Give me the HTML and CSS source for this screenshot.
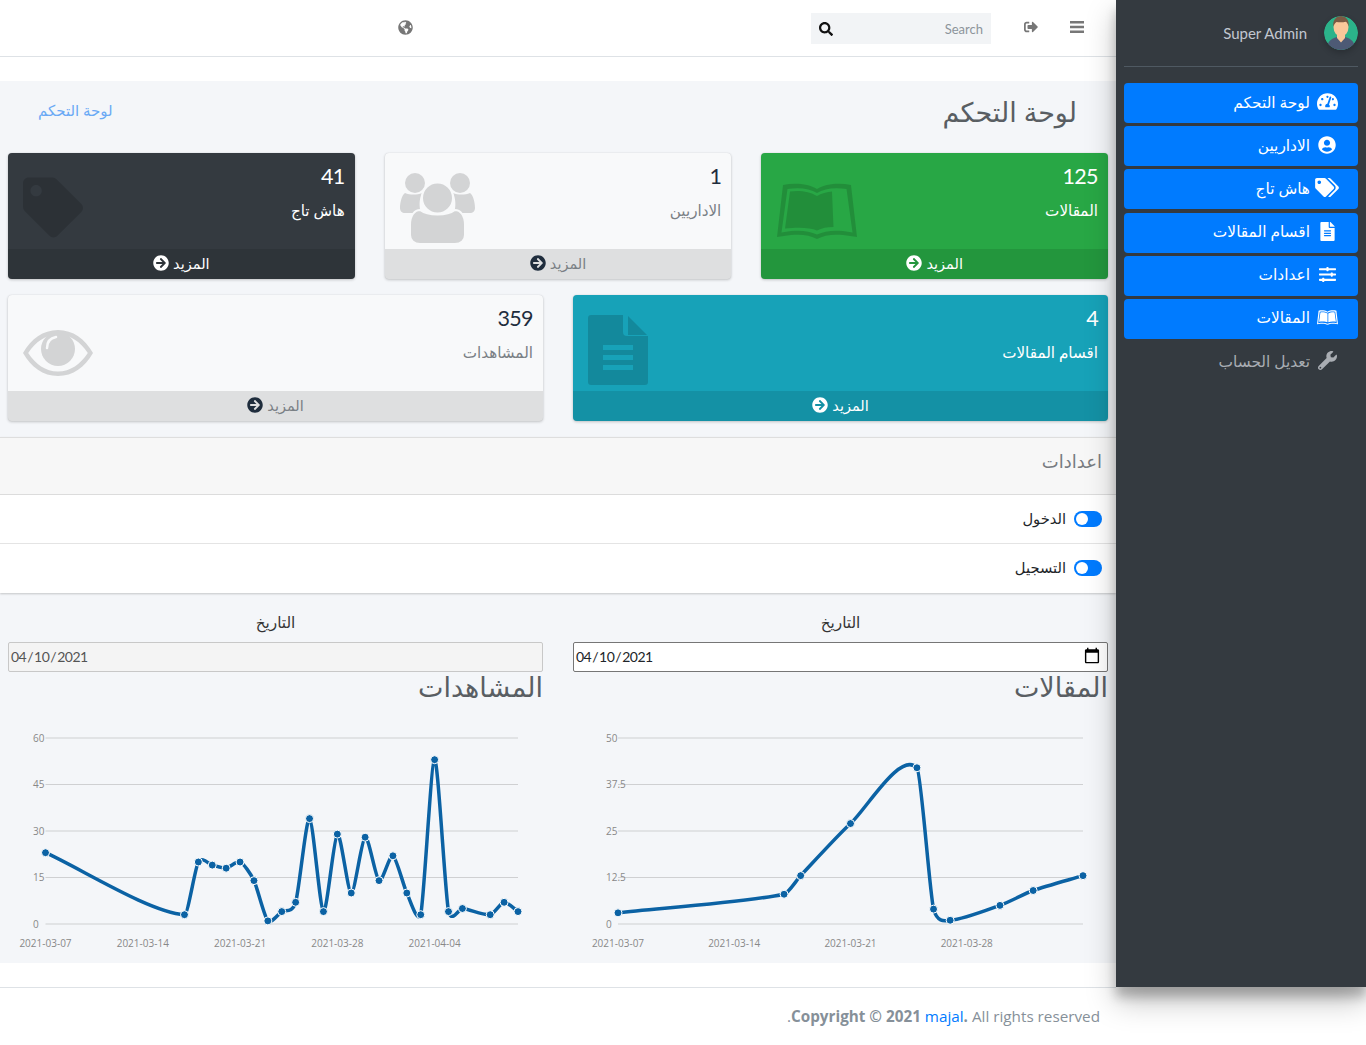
FILE: index.html
```html
<!DOCTYPE html>
<html lang="ar" dir="rtl">
<head>
<meta charset="utf-8">
<title>لوحة التحكم</title>
<link rel="stylesheet" href="styles.css">
</head>
<body>
<div class="page">
  <aside class="sidebar">
    <div class="user-panel">
      <svg class="avatar" viewBox="0 0 34 34"><defs><clipPath id="av"><circle cx="17" cy="17" r="17"/></clipPath></defs><g clip-path="url(#av)"><rect width="34" height="34" fill="#2bb38a"/><path d="M3 34c0-8 3-11 10-13l4 3 4-3c7 2 10 5 10 13z" fill="#4d5a75"/><path d="M13 17h8v5l-4 4.500-4-4.500z" fill="#f9c79a"/><ellipse cx="17" cy="11" rx="7.500" ry="9.500" fill="#f9c79a"/><path d="M9.300 10.500C8.500 4 12.500 0 17 0s8.500 4 7.700 10.500c-.8-2.500-1.700-4-2.700-4.800-3 .8-7 .8-9.500.3-1.200 1-2.300 2.300-3.200 4.500z" fill="#7a5a44"/></g></svg>
      <span class="user-name">Super Admin</span>
    </div>
    <nav class="side-nav">
      <a class="nav-link active"><span class="nav-icon"><svg viewBox="0 0 576 512" width="21" height="19"><path d="M288 32C128.94 32 0 160.94 0 320c0 52.8 14.25 102.26 39.06 144.8 5.61 9.62 16.3 15.2 27.44 15.2h443c11.14 0 21.83-5.58 27.44-15.2C561.75 422.26 576 372.8 576 320c0-159.06-128.94-288-288-288zm0 64c14.71 0 26.58 10.13 30.32 23.65-1.11 2.26-2.64 4.23-3.45 6.67l-9.22 27.67c-5.13 3.49-10.97 6.01-17.64 6.01-17.67 0-32-14.33-32-32S270.33 96 288 96zM96 384c-17.67 0-32-14.33-32-32s14.33-32 32-32 32 14.33 32 32-14.33 32-32 32zm48-160c-17.67 0-32-14.33-32-32s14.33-32 32-32 32 14.33 32 32-14.33 32-32 32zm246.77-72.41l-61.33 184C343.13 347.33 352 364.54 352 384c0 11.72-3.38 22.55-8.88 32H232.88c-5.5-9.45-8.88-20.28-8.88-32 0-33.94 26.5-61.43 59.9-63.59l61.34-184.01c4.17-12.56 17.73-19.45 30.36-15.17 12.57 4.19 19.35 17.79 15.17 30.36zm14.66 57.2l15.52-46.55c3.47-1.29 7.13-2.23 11.05-2.23 17.67 0 32 14.33 32 32s-14.33 32-32 32c-11.38-.01-20.89-6.28-26.57-15.22zM480 384c-17.67 0-32-14.33-32-32s14.33-32 32-32 32 14.33 32 32-14.33 32-32 32z"/></svg></span><span class="nav-text">لوحة التحكم</span></a>
      <a class="nav-link active"><span class="nav-icon"><svg viewBox="0 0 496 512" width="18" height="18"><path d="M248 8C111 8 0 119 0 256s111 248 248 248 248-111 248-248S385 8 248 8zm0 96c48.6 0 88 39.4 88 88s-39.400 88-88 88-88-39.400-88-88 39.400-88 88-88zm0 344c-58.700 0-111.300-26.600-146.500-68.200 18.800-35.400 55.600-59.800 98.500-59.800 2.400 0 4.800.4 7.100 1.100 13 4.200 26.600 6.900 40.900 6.900 14.300 0 28-2.700 40.900-6.900 2.300-.7 4.700-1.100 7.100-1.100 42.900 0 79.700 24.400 98.500 59.800C359.300 421.400 306.700 448 248 448z"/></svg></span><span class="nav-text">الاداريين</span></a>
      <a class="nav-link active"><span class="nav-icon"><svg viewBox="0 0 640 512" width="24" height="19"><path d="M497.941 225.941L286.059 14.059A48 48 0 0 0 252.118 0H48C21.490 0 0 21.490 0 48v204.118a48 48 0 0 0 14.059 33.941l211.882 211.882c18.744 18.745 49.136 18.746 67.882 0l204.118-204.118c18.745-18.745 18.745-49.137 0-67.882zM112 160c-26.510 0-48-21.490-48-48s21.490-48 48-48 48 21.490 48 48-21.490 48-48 48zm513.941 133.823L421.823 497.941c-18.745 18.745-49.137 18.745-67.882 0l-.36-.36L527.640 323.522c16.999-16.999 26.360-39.600 26.360-63.640s-9.362-46.641-26.360-63.640L331.397 0h48.721a48 48 0 0 1 33.941 14.059l211.882 211.882c18.745 18.745 18.745 49.137 0 67.882z"/></svg></span><span class="nav-text">هاش تاج</span></a>
      <a class="nav-link active"><span class="nav-icon"><svg viewBox="0 0 384 512" width="15" height="19"><path d="M224 136V0H24C10.700 0 0 10.700 0 24v464c0 13.300 10.700 24 24 24h336c13.300 0 24-10.700 24-24V160H248c-13.200 0-24-10.800-24-24zm64 236c0 6.600-5.400 12-12 12H108c-6.600 0-12-5.400-12-12v-8c0-6.600 5.400-12 12-12h168c6.600 0 12 5.400 12 12v8zm0-64c0 6.600-5.400 12-12 12H108c-6.600 0-12-5.400-12-12v-8c0-6.600 5.400-12 12-12h168c6.600 0 12 5.400 12 12v8zm0-72v8c0 6.600-5.400 12-12 12H108c-6.600 0-12-5.400-12-12v-8c0-6.600 5.400-12 12-12h168c6.600 0 12 5.400 12 12zm96-114.100v6.100H256V0h6.100c6.400 0 12.500 2.500 17 7l97.900 98c4.500 4.500 7 10.600 7 16.900z"/></svg></span><span class="nav-text">اقسام المقالات</span></a>
      <a class="nav-link active"><span class="nav-icon"><svg viewBox="0 0 512 512" width="17" height="17"><path d="M496 384H160v-16c0-8.800-7.200-16-16-16h-32c-8.800 0-16 7.200-16 16v16H16c-8.800 0-16 7.200-16 16v32c0 8.800 7.200 16 16 16h80v16c0 8.800 7.200 16 16 16h32c8.800 0 16-7.200 16-16v-16h336c8.800 0 16-7.200 16-16v-32c0-8.800-7.200-16-16-16zm0-160h-80v-16c0-8.800-7.200-16-16-16h-32c-8.800 0-16 7.200-16 16v16H16c-8.800 0-16 7.200-16 16v32c0 8.800 7.200 16 16 16h336v16c0 8.800 7.200 16 16 16h32c8.800 0 16-7.200 16-16v-16h80c8.800 0 16-7.200 16-16v-32c0-8.800-7.200-16-16-16zm0-160H288V48c0-8.800-7.200-16-16-16h-32c-8.800 0-16 7.200-16 16v16H16C7.200 64 0 71.200 0 80v32c0 8.800 7.200 16 16 16h208v16c0 8.800 7.200 16 16 16h32c8.800 0 16-7.200 16-16v-16h208c8.800 0 16-7.200 16-16V80c0-8.800-7.200-16-16-16z"/></svg></span><span class="nav-text">اعدادات</span></a>
      <a class="nav-link active"><span class="nav-icon"><svg viewBox="0 0 80 56" width="21" height="15"><path fill-rule="evenodd" d="M6 2C18-.5 32 1 40 6 48 1 62-.5 74 2l6 52-14-2c-10-1-19 0-26 4-7-4-16-5-26-4L0 54zM10.500 6 4.500 49.500 14 48c10-1 19 0 26 3.500C47 48 56 47 66 48l9.500 1.500L69.500 6C58 4 47 5.500 40 10 33 5.500 22 4 10.500 6z"/><path d="M13 8.500c9-1.500 20 0 27 4.500v33c-7-3-18-3.500-32-2zM43 13c5-3 13-5 24-4.500l5 35.500c-11-1.500-21-1-29 2z"/></svg></span><span class="nav-text">المقالات</span></a>
      <a class="nav-link muted"><span class="nav-icon"><svg viewBox="0 0 512 512" width="19" height="19"><path d="M507.730 109.100c-2.240-9.030-13.540-12.090-20.120-5.510l-74.360 74.360-67.880-11.310-11.310-67.880 74.360-74.360c6.620-6.620 3.430-17.900-5.660-20.160-47.380-11.740-99.550.91-136.580 37.930-39.640 39.640-50.550 97.100-34.050 147.200L18.740 402.760c-24.990 24.990-24.990 65.510 0 90.500 24.990 24.990 65.510 24.990 90.500 0l213.210-213.210c50.120 16.710 107.470 5.680 147.370-34.220 37.070-37.070 49.700-89.320 37.910-136.730zM64 472c-13.250 0-24-10.750-24-24 0-13.260 10.750-24 24-24s24 10.740 24 24c0 13.250-10.750 24-24 24z"/></svg></span><span class="nav-text">تعديل الحساب</span></a>
    </nav>
  </aside>

  <div class="main">
    <header class="navbar">
      <button class="nav-btn" aria-label="menu"><svg viewBox="0 0 14 14" width="14" height="14"><path d="M0 1h14v2.400H0zM0 5.800h14v2.400H0zM0 10.600h14V13H0z"/></svg></button>
      <button class="nav-btn" aria-label="logout"><svg viewBox="0 0 512 512" width="14" height="14"><path d="M497 273L329 441c-15 15-41 4.500-41-17v-96H152c-13.300 0-24-10.700-24-24v-96c0-13.300 10.700-24 24-24h136V88c0-21.400 25.900-32 41-17l168 168c9.300 9.400 9.300 24.600 0 34zM192 436v-40c0-6.600-5.400-12-12-12H96c-17.700 0-32-14.300-32-32V160c0-17.700 14.300-32 32-32h84c6.600 0 12-5.400 12-12V76c0-6.600-5.400-12-12-12H96c-53 0-96 43-96 96v192c0 53 43 96 96 96h84c6.600 0 12-5.400 12-12z"/></svg></button>
      <div class="search"><span class="search-text">Search</span><svg viewBox="0 0 512 512" width="14" height="14"><path d="M505 442.700L405.300 343c-4.500-4.500-10.600-7-17-7H372c27.600-35.300 44-79.700 44-128C416 93.100 322.900 0 208 0S0 93.100 0 208s93.100 208 208 208c48.300 0 92.700-16.400 128-44v16.300c0 6.400 2.500 12.500 7 17l99.700 99.700c9.400 9.400 24.600 9.400 33.900 0l28.300-28.300c9.400-9.400 9.400-24.600.1-34zM208 336c-70.700 0-128-57.200-128-128 0-70.700 57.200-128 128-128 70.700 0 128 57.200 128 128 0 70.700-57.200 128-128 128z"/></svg></div>
      <button class="nav-btn globe" aria-label="language"><svg viewBox="0 0 496 512" width="15" height="15"><path d="M248 8C111.030 8 0 119.030 0 256s111.030 248 248 248 248-111.030 248-248S384.970 8 248 8zm82.290 357.600c-3.900 3.880-7.990 7.950-11.310 11.280-2.990 3-5.100 6.700-6.170 10.710-1.510 5.660-2.730 11.380-4.770 16.870l-17.390 46.850c-13.760 3-28 4.690-42.650 4.690v-27.380c1.690-12.620-7.640-36.260-22.630-51.250-6-6-9.370-14.140-9.370-22.630v-32.010c0-11.640-6.270-22.340-16.460-27.970-14.370-7.950-34.810-19.060-48.810-26.110-11.480-5.780-22.100-13.140-31.650-21.750l-.8-.72a114.792 114.792 0 0 1-18.060-20.740c-9.380-13.770-24.660-36.420-34.590-51.140 20.470-45.500 57.360-82.040 103.200-101.890l24.010 12.010C203.480 89.740 216 82.010 216 70.110v-11.300c7.990-1.290 16.120-2.110 24.390-2.420l28.300 28.300c6.250 6.250 6.250 16.380 0 22.630L264 112l-10.340 10.340c-3.120 3.120-3.120 8.190 0 11.310l4.690 4.690c3.120 3.120 3.120 8.190 0 11.310l-8 8a8.008 8.008 0 0 1-5.660 2.340h-8.990c-2.080 0-4.080.81-5.580 2.270l-9.920 9.650a8.008 8.008 0 0 0-1.580 9.310l15.590 31.190c2.660 5.320-1.210 11.580-7.150 11.580h-5.640c-1.930 0-3.790-.7-5.240-1.960l-9.280-8.060a16.017 16.017 0 0 0-15.550-3.100l-31.170 10.390a11.950 11.950 0 0 0-8.170 11.340c0 4.530 2.560 8.660 6.610 10.690l11.080 5.540c9.410 4.710 19.790 7.160 30.310 7.160s22.590 27.290 32 32h66.750c8.490 0 16.620 3.370 22.630 9.370l13.690 13.690a30.503 30.503 0 0 1 8.930 21.570 46.536 46.536 0 0 1-13.720 32.980zM417 274.250c-5.790-1.450-10.840-5-14.150-9.970l-17.980-26.970a23.970 23.970 0 0 1 0-26.620l19.590-29.380c2.320-3.470 5.500-6.290 9.240-8.150l12.980-6.490C440.200 193.590 448 223.870 448 256c0 8.670-.74 17.160-1.820 25.540L417 274.250z"/></svg></button>
    </header>

    <main class="content">
      <div class="content-head">
        <h1 class="page-title">لوحة التحكم</h1>
        <a class="crumb">لوحة التحكم</a>
      </div>

      <section class="cards cards-3">
        <article class="stat stat-green">
          <div class="stat-body"><div class="stat-num">125</div><div class="stat-label">المقالات</div>
            <svg class="stat-icon icon-book" viewBox="0 0 80 56"><path fill-rule="evenodd" d="M6 2C18-.5 32 1 40 6 48 1 62-.5 74 2l6 52-14-2c-10-1-19 0-26 4-7-4-16-5-26-4L0 54zM10.500 6 4.500 49.500 14 48c10-1 19 0 26 3.500C47 48 56 47 66 48l9.500 1.500L69.500 6C58 4 47 5.500 40 10 33 5.500 22 4 10.500 6z"/><path d="M13 8.500c9-1.500 20 0 27 4.500 4-2.500 10-4 15-4.500L56.500 44c-6.500 0-11.500 1-16.500 3.500C33 44.500 22 44 8 45.500z"/></svg>
          </div>
          <a class="stat-more"><span class="more-text">المزيد</span><svg class="more-icon" viewBox="0 0 512 512"><path d="M256 8c137 0 248 111 248 248S393 504 256 504 8 393 8 256 119 8 256 8zm-28.900 143.600l75.500 72.400H120c-13.300 0-24 10.700-24 24v16c0 13.300 10.700 24 24 24h182.600l-75.500 72.400c-9.700 9.300-9.900 24.800-.4 34.300l11 10.900c9.400 9.400 24.600 9.400 33.900 0L404.300 273c9.400-9.400 9.400-24.600 0-33.900L271.600 106.300c-9.400-9.400-24.600-9.400-33.900 0l-11 10.900c-9.500 9.600-9.300 25.100.4 34.400z"/></svg></a>
        </article>
        <article class="stat stat-light">
          <div class="stat-body"><div class="stat-num">1</div><div class="stat-label">الاداريين</div>
            <svg class="stat-icon icon-users" viewBox="0 0 76 72"><g fill="#d3d4d5"><circle cx="15" cy="10" r="10"/><circle cx="60" cy="10" r="10"/><path d="M5 20c-3 2-5 9-5 15 0 3 2 5 5 5h16c-2-6-2-14 1-20-5 2-12 2-17 0z"/><path d="M70 20c3 2 5 9 5 15 0 3-2 5-5 5H54c2-6 2-14-1-20 5 2 12 2 17 0z"/></g><g fill="#d3d4d5" stroke="#f8f9fa" stroke-width="2"><circle cx="37.500" cy="25" r="15.500"/><path d="M10 52c0-10 5-15 10-15 8 6 27 6 35 0 5 0 10 5 10 15v10c0 5-4 9-10 9H20c-6 0-10-4-10-9z"/></g></svg>
          </div>
          <a class="stat-more"><span class="more-text">المزيد</span><svg class="more-icon" viewBox="0 0 512 512"><path d="M256 8c137 0 248 111 248 248S393 504 256 504 8 393 8 256 119 8 256 8zm-28.900 143.600l75.500 72.400H120c-13.300 0-24 10.700-24 24v16c0 13.300 10.700 24 24 24h182.600l-75.500 72.400c-9.700 9.300-9.900 24.800-.4 34.300l11 10.900c9.400 9.400 24.600 9.400 33.900 0L404.300 273c9.400-9.400 9.400-24.600 0-33.900L271.600 106.300c-9.400-9.400-24.600-9.400-33.900 0l-11 10.900c-9.500 9.600-9.300 25.100.4 34.400z"/></svg></a>
        </article>
        <article class="stat stat-dark">
          <div class="stat-body"><div class="stat-num">41</div><div class="stat-label">هاش تاج</div>
            <svg class="stat-icon icon-tag" viewBox="0 0 512 512"><path d="M0 252.118V48C0 21.490 21.490 0 48 0h204.118a48 48 0 0 1 33.941 14.059l211.882 211.882c18.745 18.745 18.745 49.137 0 67.882L293.823 497.941c-18.745 18.745-49.137 18.745-67.882 0L14.059 286.059A48 48 0 0 1 0 252.118zM112 64c-26.510 0-48 21.490-48 48s21.490 48 48 48 48-21.490 48-48-21.490-48-48-48z"/></svg>
          </div>
          <a class="stat-more"><span class="more-text">المزيد</span><svg class="more-icon" viewBox="0 0 512 512"><path d="M256 8c137 0 248 111 248 248S393 504 256 504 8 393 8 256 119 8 256 8zm-28.900 143.600l75.500 72.400H120c-13.300 0-24 10.700-24 24v16c0 13.300 10.700 24 24 24h182.600l-75.500 72.400c-9.700 9.300-9.900 24.800-.4 34.300l11 10.900c9.400 9.400 24.600 9.400 33.900 0L404.300 273c9.400-9.400 9.400-24.600 0-33.900L271.600 106.300c-9.400-9.400-24.600-9.400-33.900 0l-11 10.900c-9.500 9.600-9.300 25.100.4 34.400z"/></svg></a>
        </article>
      </section>

      <section class="cards cards-2">
        <article class="stat stat-teal">
          <div class="stat-body"><div class="stat-num">4</div><div class="stat-label">اقسام المقالات</div>
            <svg class="stat-icon icon-doc" viewBox="0 0 60 70"><path d="M3 0H35V17a4 4 0 0 0 4 4H60V67a3 3 0 0 1-3 3H3a3 3 0 0 1-3-3V3a3 3 0 0 1 3-3zM15 30v5H45V30zM15 40v5H45V40zM15 50v5H45V50z" fill-rule="evenodd"/><path d="M40 1 59 20H40z"/></svg>
          </div>
          <a class="stat-more"><span class="more-text">المزيد</span><svg class="more-icon" viewBox="0 0 512 512"><path d="M256 8c137 0 248 111 248 248S393 504 256 504 8 393 8 256 119 8 256 8zm-28.900 143.600l75.500 72.400H120c-13.300 0-24 10.700-24 24v16c0 13.300 10.700 24 24 24h182.600l-75.500 72.400c-9.700 9.300-9.900 24.800-.4 34.300l11 10.900c9.400 9.400 24.600 9.400 33.900 0L404.300 273c9.400-9.400 9.400-24.600 0-33.900L271.600 106.300c-9.400-9.400-24.600-9.400-33.900 0l-11 10.900c-9.500 9.600-9.300 25.100.4 34.400z"/></svg></a>
        </article>
        <article class="stat stat-light">
          <div class="stat-body"><div class="stat-num">359</div><div class="stat-label">المشاهدات</div>
            <svg class="stat-icon icon-eye" viewBox="0 0 70 46"><path fill-rule="evenodd" fill="#d3d4d5" d="M35 0C20 0 8 9 0 23c8 14 20 23 35 23s27-9 35-23C62 9 50 0 35 0zm0 4.500c12.500 0 22.500 7.500 29.800 18.500C57.500 34 47.500 41.500 35 41.500S12.500 34 5.200 23C12.500 12 22.500 4.500 35 4.500z"/><circle cx="35" cy="19" r="17" fill="#d3d4d5"/><path d="M24 18c0-6 3.500-10 9-11" fill="none" stroke="#f8f9fa" stroke-width="2.500" stroke-linecap="round"/></svg>
          </div>
          <a class="stat-more"><span class="more-text">المزيد</span><svg class="more-icon" viewBox="0 0 512 512"><path d="M256 8c137 0 248 111 248 248S393 504 256 504 8 393 8 256 119 8 256 8zm-28.900 143.600l75.500 72.400H120c-13.300 0-24 10.700-24 24v16c0 13.300 10.700 24 24 24h182.600l-75.500 72.400c-9.700 9.300-9.900 24.800-.4 34.300l11 10.900c9.400 9.400 24.600 9.400 33.900 0L404.300 273c9.400-9.400 9.400-24.600 0-33.900L271.600 106.300c-9.400-9.400-24.600-9.400-33.900 0l-11 10.900c-9.500 9.600-9.300 25.100.4 34.400z"/></svg></a>
        </article>
      </section>

      <section class="settings">
        <div class="settings-head">اعدادات</div>
        <div class="settings-row"><span class="switch"></span><span class="row-text">الدخول</span></div>
        <div class="settings-row"><span class="switch"></span><span class="row-text">التسجيل</span></div>
      </section>

      <section class="charts">
        <div class="chart-col">
          <label class="date-label">التاريخ</label>
          <input class="date-input" type="date" value="2021-04-10" dir="ltr">
          <h2 class="chart-title">المقالات</h2>
          <svg class="chart" id="chart-articles" viewBox="0 0 535 251"></svg>
        </div>
        <div class="chart-col">
          <label class="date-label">التاريخ</label>
          <input class="date-input" type="date" value="2021-04-10" dir="ltr" disabled>
          <h2 class="chart-title">المشاهدات</h2>
          <svg class="chart" id="chart-views" viewBox="0 0 535 251"></svg>
        </div>
      </section>
    </main>

    <footer class="footer"><strong>Copyright © 2021 <a class="brand">majal</a>.</strong> <span>All rights reserved</span><span>.</span></footer>
  </div>
</div>
<script src="chart.js"></script>
</body>
</html>
```

FILE: styles.css
```css
* { box-sizing: border-box; }
html, body { margin: 0; padding: 0; }
body {
  font-family: "Lato", "DejaVu Sans", sans-serif;
  font-size: 14px;
  color: #212529;
  background: #fff;
}
.page {
  display: grid;
  grid-template-columns: 250px 1fr;
  height: 1045px;
  overflow: hidden;
}
.sidebar {
  height: 987px;
  background: #343a40;
  padding: 0 8px;
  position: relative;
  z-index: 2;
  box-shadow: 0 14px 28px rgba(0,0,0,.25), 0 10px 10px rgba(0,0,0,.22);
}
.user-panel {
  height: 67px;
  border-bottom: 1px solid #4f5962;
  display: flex;
  align-items: center;
  gap: 17px;
  padding-bottom: 1px;
}
.avatar { width: 34px; height: 34px; border-radius: 50%; box-shadow: 0 3px 6px rgba(0,0,0,.2); }
.user-name { color: #c2c7d0; font-size: 15px; }
.side-nav { margin-top: 16px; display: flex; flex-direction: column; gap: 3.2px; }
.nav-link {
  height: 40px;
  display: flex;
  align-items: center;
  gap: 5px;
  padding-right: 19px;
  border-radius: 4px;
  font-size: 15.4px;
}
.nav-link.active { background: #007bff; color: #fff; }
.nav-link.muted { color: #a9adb3; }
.nav-text { padding-bottom: 2px; }
.nav-icon { width: 24px; display: flex; justify-content: center; align-items: center; margin-bottom: 3px; }
.nav-icon svg { fill: currentColor; display: block; }

.main { display: flex; flex-direction: column; min-width: 0; }
.navbar {
  height: 57px;
  flex: none;
  border-bottom: 1px solid #dee2e6;
  display: flex;
  align-items: center;
  padding: 0 32px 2px 0;
  gap: 32px;
}
.nav-btn { background: none; border: 0; padding: 0; color: #777; display: flex; }
.nav-btn svg { fill: currentColor; display: block; }
.globe { margin-right: 366px; }
.search {
  width: 180px;
  height: 31px;
  margin-top: 3px;
  margin-right: 1px;
  background: #f2f4f6;
  display: flex;
  align-items: center;
  justify-content: space-between;
  padding: 0 8px;
}
.search-text { color: #8d949b; font-size: 13px; }
.search svg { fill: #111; }

.content { margin-top: 24px; height: 882px; flex: none; background: #f4f6f9; }
.content-head {
  height: 72px;
  display: flex;
  justify-content: space-between;
  align-items: center;
  padding: 0 39px 12px 38px;
}
.page-title { margin: 0; font-size: 27px; font-weight: 400; color: #595e63; }
.crumb { color: #6aa9f5; font-size: 15px; padding-bottom: 2px; }

.cards { display: grid; gap: 30px; padding: 0 8px; margin-bottom: 16px; }
.cards-3 { grid-template-columns: repeat(3, 1fr); }
.cards-2 { grid-template-columns: repeat(2, 1fr); }
.stat {
  height: 126px;
  border-radius: 4px;
  overflow: hidden;
  display: flex;
  flex-direction: column;
  box-shadow: 0 0 1px rgba(0,0,0,.125), 0 1px 3px rgba(0,0,0,.2);
}
.stat-body { flex: 1; padding: 10px; position: relative; }
.stat-num { font-size: 21.5px; line-height: 27px; letter-spacing: -.6px; }
.stat-label { font-size: 15.2px; line-height: 20px; margin-top: 10px; }
.stat-icon { position: absolute; fill: rgba(0,0,0,.15); }
.icon-book { left: 16px; top: 30px; width: 80px; height: 56px; }
.icon-users { left: 15px; top: 20px; width: 76px; height: 72px; }
.icon-tag { left: 15px; top: 24px; width: 60px; height: 61px; }
.icon-doc { left: 15px; top: 20px; width: 60px; height: 70px; }
.icon-eye { left: 15px; top: 35px; width: 70px; height: 46px; }
.stat-more {
  height: 30px;
  flex: none;
  background: rgba(0,0,0,.1);
  display: flex;
  justify-content: center;
  align-items: center;
  gap: 4px;
  font-size: 14.5px;
}
.more-text { padding-bottom: 2px; }
.more-icon { width: 16px; height: 16px; fill: currentColor; margin-bottom: 2px; }
.stat-green { background: #28a745; color: #fff; }
.stat-dark { background: #343a40; color: #fff; }
.stat-teal { background: #17a2b8; color: #fff; }
.stat-light { background: #f8f9fa; color: #1f2d3d; }
.stat-light .stat-label, .stat-light .more-text { color: #7a8085; }

.settings {
  box-shadow: 0 1px 2px rgba(0,0,0,.2);
  border-top: 1px solid #dedede;
  background: #fff;
}
.settings-head {
  height: 57px;
  background: #f7f7f7;
  border-bottom: 1px solid #dcdcdc;
  padding: 0 14px 11px;
  display: flex;
  align-items: center;
  font-size: 18px;
  color: #777c81;
}
.settings-row {
  height: 49px;
  border-bottom: 1px solid #e4e4e4;
  display: flex;
  align-items: center;
  gap: 8px;
  padding: 0 14px 1px;
  font-size: 14.7px;
}
.settings-row:last-child { border-bottom: 0; }
.row-text { padding-bottom: 2px; }
.switch {
  width: 28px;
  height: 16px;
  border-radius: 8px;
  background: #007bff;
  position: relative;
}
.switch::after {
  content: "";
  position: absolute;
  left: 2px;
  top: 2px;
  width: 12px;
  height: 12px;
  border-radius: 50%;
  background: #fff;
}

.charts {
  display: grid;
  grid-template-columns: 1fr 1fr;
  gap: 30px;
  padding: 17px 8px 0;
}
.chart-col { display: flex; flex-direction: column; min-width: 0; }
.date-label { text-align: center; height: 24px; line-height: 24px; font-size: 15.3px; margin-bottom: 8px; color: #333; }
.date-input {
  height: 30px;
  width: 100%;
  padding: 0 1px 2px;
  border: 1px solid #767676;
  border-radius: 2px;
  background: #fff;
  font-family: "Lato", sans-serif;
  font-size: 14px;
  letter-spacing: -.5px;
  color: #212529;
}
.date-input::-webkit-calendar-picker-indicator { width: 18px; height: 18px; margin: 0 5px 0 0; padding: 0; }
.date-input:disabled { background: #f4f4f4; color: #545454; border-color: #c8c8c8; }
.chart-title { margin: 0; height: 40px; line-height: 30px; font-size: 27px; font-weight: 400; color: #595e63; }
.chart { display: block; width: 535px; height: 251px; direction: ltr; font-family: "Open Sans", sans-serif; font-size: 10px; }
.chart-grid { stroke: #aaa; stroke-width: .5; }
.chart-text { fill: #888; }
.chart-line { fill: none; stroke: #0b62a4; stroke-width: 3.5; }
.chart-point { fill: #0b62a4; stroke: #fff; stroke-width: 1; }

.footer {
  margin-top: 24px;
  border-top: 1px solid #dee2e6;
  flex: 1;
  padding: 16px 16px 0;
  font-family: "Open Sans", sans-serif;
  font-size: 15.25px;
  line-height: 24px;
  color: #869099;
}
.brand { color: #007bff; font-weight: 400; }
```

FILE: chart.js
```js
(function () {
  var NS = "http://www.w3.org/2000/svg";
  var TOP = 26, BOTTOM = 212;

  function el(parent, name, attrs, text) {
    var node = document.createElementNS(NS, name);
    for (var k in attrs) node.setAttribute(k, attrs[k]);
    if (text !== undefined) node.textContent = text;
    parent.appendChild(node);
    return node;
  }

  function slope(a, b) { return (a.y - b.y) / (a.x - b.x); }

  function smoothPath(pts) {
    var grads = pts.map(function (p, i) {
      var prev = pts[i - 1], next = pts[i + 1];
      if (prev && next) return slope(prev, next);
      return prev ? slope(prev, p) : slope(p, next);
    });
    var d = "M" + pts[0].x + "," + pts[0].y;
    for (var i = 1; i < pts.length; i++) {
      var a = pts[i - 1], b = pts[i], ix = (b.x - a.x) / 4;
      var y1 = Math.min(BOTTOM, a.y + ix * grads[i - 1]);
      var y2 = Math.min(BOTTOM, b.y - ix * grads[i]);
      d += "C" + (a.x + ix) + "," + y1 + "," + (b.x - ix) + "," + y2 + "," + b.x + "," + b.y;
    }
    return d;
  }

  function draw(cfg) {
    var svg = document.getElementById(cfg.id);
    var step = (cfg.right - cfg.left) / cfg.days;
    var yStep = (BOTTOM - TOP) / (cfg.yLabels.length - 1);
    cfg.yLabels.forEach(function (label, i) {
      var y = TOP + i * yStep;
      el(svg, "line", { x1: cfg.left, x2: cfg.right, y1: y, y2: y, "class": "chart-grid" });
      el(svg, "text", { x: cfg.yLabelX, y: y + 3.5, "class": "chart-text" }, label);
    });
    cfg.xLabels.forEach(function (item) {
      el(svg, "text", { x: cfg.left + item[0] * step, y: 235, "text-anchor": "middle", "class": "chart-text" }, item[1]);
    });
    var scale = (BOTTOM - TOP) / cfg.max;
    var pts = cfg.data.map(function (d) {
      return { x: cfg.left + d[0] * step, y: BOTTOM - d[1] * scale };
    });
    el(svg, "path", { d: smoothPath(pts), "class": "chart-line" });
    pts.forEach(function (p) {
      el(svg, "circle", { cx: p.x, cy: p.y, r: 4, "class": "chart-point" });
    });
  }

  draw({
    id: "chart-articles", left: 45, right: 510, days: 28, max: 50, yLabelX: 33,
    yLabels: ["50", "37.5", "25", "12.5", "0"],
    xLabels: [[0, "2021-03-07"], [7, "2021-03-14"], [14, "2021-03-21"], [21, "2021-03-28"]],
    data: [[0, 3], [10, 8], [11, 13], [14, 27], [18, 42], [19, 4], [20, 1], [23, 5], [25, 9], [28, 13]]
  });

  draw({
    id: "chart-views", left: 37.5, right: 510, days: 34, max: 60, yLabelX: 25,
    yLabels: ["60", "45", "30", "15", "0"],
    xLabels: [[0, "2021-03-07"], [7, "2021-03-14"], [14, "2021-03-21"], [21, "2021-03-28"], [28, "2021-04-04"]],
    data: [[0, 23], [10, 3], [11, 20], [12, 19], [13, 18], [14, 20], [15, 14], [16, 1], [17, 4], [18, 7], [19, 34], [20, 4],
      [21, 29], [22, 10], [23, 28], [24, 14], [25, 22], [26, 10], [27, 3], [28, 53], [29, 4], [30, 5], [32, 3], [33, 7], [34, 4]]
  });
})();
```
